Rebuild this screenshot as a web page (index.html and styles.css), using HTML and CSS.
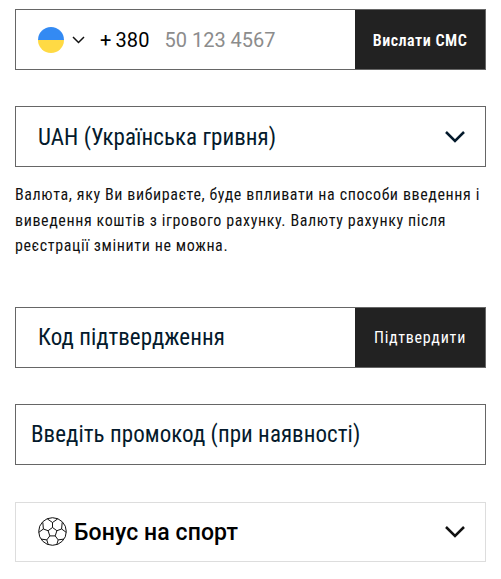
FILE: index.html
```html
<!DOCTYPE html>
<html lang="uk">
<head>
    <meta charset="UTF-8">
    <meta name="viewport" content="width=device-width, initial-scale=1.0">
    <title>Реєстрація</title>
    <link rel="stylesheet" href="styles.css">
</head>
<body>
    <form class="form">
        <div class="field phone-field">
            <div class="phone-main">
                <svg class="flag" width="26" height="26" viewBox="0 0 26 26">
                    <path d="M0 13a13 13 0 0 1 26 0z" fill="#338af3"/>
                    <path d="M0 13a13 13 0 0 0 26 0z" fill="#ffda44"/>
                </svg>
                <svg class="chevron-small" width="13" height="8" viewBox="0 0 13 8">
                    <path d="M1 1l5.500 5.500L12 1" fill="none" stroke="#111" stroke-width="1.500"/>
                </svg>
                <span class="phone-code"><span class="phone-plus">+</span>380</span>
                <span class="phone-placeholder">50 123 4567</span>
            </div>
            <button type="button" class="field-btn sms-btn">Вислати СМС</button>
        </div>

        <div class="field select-field currency-field">
            <span class="label-text">UAH (Українська гривня)</span>
            <svg class="chevron" width="20" height="12" viewBox="0 0 20 12">
                <path d="M1 1l9 9 9-9" fill="none" stroke="#041a2c" stroke-width="2.500"/>
            </svg>
        </div>

        <p class="note">Валюта, яку Ви вибираєте, буде впливати на способи введення і виведення коштів з ігрового рахунку. Валюту рахунку після реєстрації змінити не можна.</p>

        <div class="field code-field">
            <span class="label-text code-label">Код підтвердження</span>
            <button type="button" class="field-btn confirm-btn">Підтвердити</button>
        </div>

        <div class="field promo-field">
            <span class="label-text">Введіть промокод (при наявності)</span>
        </div>

        <div class="field select-field bonus-field">
            <div class="bonus-title">
                <svg class="ball" width="29" height="29" viewBox="0 0 29 29" fill="none" stroke="#111" stroke-width="1">
                    <circle cx="14.500" cy="14.500" r="13.800"/>
                    <path d="M14.500 10.500l4.400 3.200-1.700 5.200h-5.400l-1.700-5.200z"/>
                    <path d="M14.500 10.500V5.500M18.900 13.700l4.700-1.700M17.200 18.900l3 4M11.800 18.900l-3 4M10.100 13.700L5.400 12"/>
                    <path d="M9.200 1.800l5.300 3.700 5.300-3.700M23.600 12l.6-6.700M23.600 12l4.600 3.300M20.200 22.900l5.600-.8M20.200 22.900l-1.500 5M8.800 22.900l-5.600-.8M8.800 22.900l1.500 5M5.400 12l-.6-6.700M5.400 12L.8 15.300"/>
                </svg>
                <span class="bonus-text">Бонус на спорт</span>
            </div>
            <svg class="chevron" width="20" height="12" viewBox="0 0 20 12">
                <path d="M1 1l9 9 9-9" fill="none" stroke="#111" stroke-width="2.500"/>
            </svg>
        </div>
    </form>
</body>
</html>
```

FILE: styles.css
```css
* {
    box-sizing: border-box;
}
body {
    margin: 0;
    background: #fff;
    color: #000;
    font-family: Roboto, "Liberation Sans", sans-serif;
}
.form {
    display: flex;
    flex-direction: column;
    width: 471px;
    margin: 9px 0 0 15px;
}
.field {
    display: flex;
    align-items: stretch;
    height: 61px;
    border: 1px solid #666;
    background: #fff;
}
.phone-main {
    flex: 1;
    display: flex;
    align-items: center;
    padding-left: 22px;
}
.chevron-small {
    margin-left: 8px;
}
.phone-code {
    margin-left: 15px;
    font-size: 20px;
    letter-spacing: .1px;
}
.phone-plus {
    margin-right: 4px;
}
.phone-placeholder {
    margin-left: 15px;
    font-size: 20px;
    color: #8c8c8c;
}
.field-btn {
    width: 130px;
    border: none;
    background: #222;
    color: #fff;
    font-family: Roboto, "Liberation Sans", sans-serif;
    font-size: 16px;
    font-stretch: 85%;
    padding: 1px 0 0;
}
.sms-btn {
    font-weight: 600;
    letter-spacing: .5px;
}
.confirm-btn {
    font-weight: 400;
    letter-spacing: .75px;
}
.select-field {
    justify-content: space-between;
    align-items: center;
    padding: 0 20px 0 22px;
}
.currency-field {
    margin-top: 36px;
}
.label-text {
    padding-top: 1px;
    font-size: 23px;
    font-stretch: condensed;
    letter-spacing: .05px;
    color: #041a2c;
}
.note {
    margin: 15px 0 0;
    font-size: 16px;
    font-stretch: condensed;
    letter-spacing: .6px;
    line-height: 25.500px;
    color: #111;
}
.code-field {
    margin-top: 48px;
}
.code-label {
    align-self: center;
    flex: 1;
    padding-left: 22px;
}
.promo-field {
    margin-top: 36px;
    align-items: center;
    padding-left: 15px;
}
.bonus-field {
    margin-top: 37px;
    height: 60px;
    border-color: #ddd;
}
.bonus-title {
    display: flex;
    align-items: center;
    gap: 7px;
}
.bonus-text {
    padding-top: 1px;
    font-size: 23px;
    font-weight: 500;
    letter-spacing: .1px;
}
```
